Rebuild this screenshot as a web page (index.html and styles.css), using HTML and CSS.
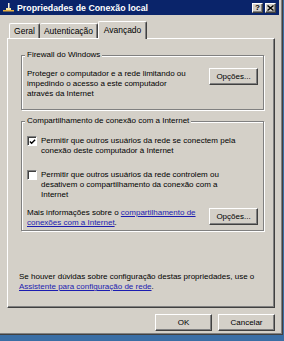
FILE: index.html
```html
<!DOCTYPE html>
<html lang="pt">
<head>
<meta charset="utf-8">
<title>Propriedades de Conexão local</title>
<link rel="stylesheet" href="styles.css">
</head>
<body>
<div class="window">
  <div class="titlebar">
    <svg class="app-icon" width="11" height="11" viewBox="0 0 11 11">
      <rect x="5" y="1" width="1.5" height="7" fill="#f4f0e0"/>
      <rect x="0" y="8" width="11" height="1.5" fill="#e8b040"/>
      <rect x="3" y="6" width="5" height="2" fill="#f8e8a0"/>
    </svg>
    <span class="title">Propriedades de Conexão local</span>
    <div class="caption-btns">
      <span class="cap-btn help">?</span>
      <span class="cap-btn close">
        <svg width="7" height="6" viewBox="0 0 7 6"><path d="M0.5 0.5 L6.5 5.5 M6.5 0.5 L0.5 5.5" stroke="#000" stroke-width="1.4"/></svg>
      </span>
    </div>
  </div>

  <div class="tabs">
    <div class="tab tab-geral">Geral</div>
    <div class="tab tab-auth">Autenticação</div>
    <div class="tab tab-adv selected">Avançado</div>
  </div>

  <div class="panel">
    <fieldset class="group group-firewall">
      <legend>Firewall do Windows</legend>
      <div class="row">
        <p class="text">Proteger o computador e a rede limitando ou<br>impedindo o acesso a este computador<br>através da Internet</p>
        <button class="btn btn-opt btn-first">Opções...</button>
      </div>
    </fieldset>

    <fieldset class="group group-share">
      <legend>Compartilhamento de conexão com a Internet</legend>
      <div class="check-row">
        <span class="checkbox">
          <svg width="8" height="8" viewBox="0 0 8 8"><polyline points="1,3.5 3,5.5 7,1.5" fill="none" stroke="#000" stroke-width="1.6"/></svg>
        </span>
        <p class="text">Permitir que outros usuários da rede se conectem pela<br>conexão deste computador à Internet</p>
      </div>
      <div class="check-row second">
        <span class="checkbox"></span>
        <p class="text">Permitir que outros usuários da rede controlem ou<br>desativem o compartilhamento da conexão com a<br>Internet</p>
      </div>
      <div class="row info-row">
        <p class="text">Mais informações sobre o <a href="#" class="link">compartilhamento de<br>conexões com a Internet</a>.</p>
        <button class="btn btn-opt">Opções...</button>
      </div>
    </fieldset>

    <p class="text footer-text">Se houver dúvidas sobre configuração destas propriedades, use o<br><a href="#" class="link">Assistente para configuração de rede</a>.</p>
  </div>

  <div class="actions">
    <button class="btn btn-dlg">OK</button>
    <button class="btn btn-dlg">Cancelar</button>
  </div>
</div>
<div class="desk"></div>
</body>
</html>
```

FILE: styles.css
```css
html, body {
  margin: 0;
  padding: 0;
}

body {
  width: 284px;
  height: 341px;
  overflow: hidden;
  background: #3a6ea5;
}

.window {
  box-sizing: border-box;
  width: 283px;
  height: 335px;
  background: #d4d0c8;
  border-right: 1px solid #404040;
  border-bottom: 1px solid #404040;
  box-shadow: inset -1px -1px 0 #808080;
  padding-right: 3px;
  font-family: "Liberation Sans", Arial, sans-serif;
  font-size: 8px;
  line-height: 10px;
  color: #000;
}

.titlebar {
  height: 15px;
  background: #0a246a;
  display: flex;
  align-items: center;
  padding: 0 3px 0 3px;
}

.app-icon {
  flex: none;
  display: block;
}

.title {
  margin-left: 3px;
  color: #fff;
  font-weight: bold;
  font-size: 8.8px;
  white-space: nowrap;
}

.caption-btns {
  margin-left: auto;
  display: flex;
  gap: 2px;
}

.cap-btn {
  box-sizing: border-box;
  width: 11px;
  height: 10px;
  background: #d4d0c8;
  border: 1px solid;
  border-color: #fff #404040 #404040 #fff;
  box-shadow: inset -1px -1px 0 #808080;
  display: flex;
  align-items: center;
  justify-content: center;
  font-weight: bold;
  font-size: 8px;
  line-height: 8px;
}

.cap-btn svg {
  display: block;
}

.tabs {
  display: flex;
  align-items: flex-end;
  height: 17px;
  margin-top: 6px;
  padding-left: 9px;
  font-size: 8.5px;
}

.tab {
  box-sizing: border-box;
  height: 15px;
  display: flex;
  align-items: center;
  justify-content: center;
  background: #d4d0c8;
  border-top: 1px solid #fff;
  border-left: 1px solid #fff;
  border-right: 1px solid #404040;
  box-shadow: inset -1px 0 0 #808080;
  border-radius: 2px 2px 0 0;
  white-space: nowrap;
}

.tab-geral { width: 31px; }
.tab-auth { width: 58px; border-left: none; }

.tab.selected {
  width: 49px;
  height: 18px;
  margin-bottom: -1px;
  position: relative;
  z-index: 1;
  padding-bottom: 2px;
}

.panel {
  box-sizing: border-box;
  height: 270px;
  margin-left: 7px;
  margin-right: 4px;
  border-top: 1px solid #fff;
  border-left: 1px solid #fff;
  border-right: 1px solid #404040;
  border-bottom: 1px solid #404040;
  box-shadow: inset -1px -1px 0 #808080;
  display: flex;
  flex-direction: column;
  padding-bottom: 15px;
}

.text {
  margin: 0;
  white-space: nowrap;
}

.group {
  margin: 0 10px 0 13px;
  border: 1px solid #808080;
  box-shadow: inset 1px 1px 0 #fff, 1px 1px 0 #fff;
  min-inline-size: 0;
}

.group legend {
  padding: 0 2px;
  margin-left: -2px;
  background: #d4d0c8;
  line-height: 10px;
}

.group-firewall {
  margin-top: 11px;
  padding: 9px 5px 10px 5px;
}

.group-share {
  margin-top: 6px;
  padding: 10px 5px 2px 5px;
}

.row {
  display: flex;
  justify-content: space-between;
  align-items: flex-start;
}

.btn {
  box-sizing: border-box;
  font: inherit;
  color: #000;
  background: #d4d0c8;
  border: 1px solid;
  border-color: #fff #404040 #404040 #fff;
  box-shadow: inset -1px -1px 0 #808080;
  padding: 0;
  margin: 0;
  height: 17px;
}

.btn-opt {
  width: 49px;
  flex: none;
}

.btn-first {
  margin-top: -1px;
}

.check-row {
  display: flex;
  align-items: flex-start;
  gap: 4px;
}

.check-row.second {
  margin-top: 14px;
}

.checkbox {
  box-sizing: border-box;
  width: 10px;
  height: 10px;
  flex: none;
  background: #fff;
  border: 1px solid;
  border-color: #808080 #fff #fff #808080;
  box-shadow: inset 1px 1px 0 #404040;
  display: flex;
  align-items: center;
  justify-content: center;
}

.checkbox svg {
  display: block;
  margin: 1px 0 0 1px;
}

.info-row {
  margin-top: 8px;
}

.link {
  color: #1c1cb0;
  text-decoration: underline;
}

.footer-text {
  margin-top: auto;
  margin-left: 11px;
}

.actions {
  display: flex;
  justify-content: flex-end;
  gap: 6px;
  margin-top: 6px;
  padding-right: 4px;
}

.btn-dlg {
  width: 57px;
}

.desk {
  height: 6px;
  background: #3a6ea5;
}
```
